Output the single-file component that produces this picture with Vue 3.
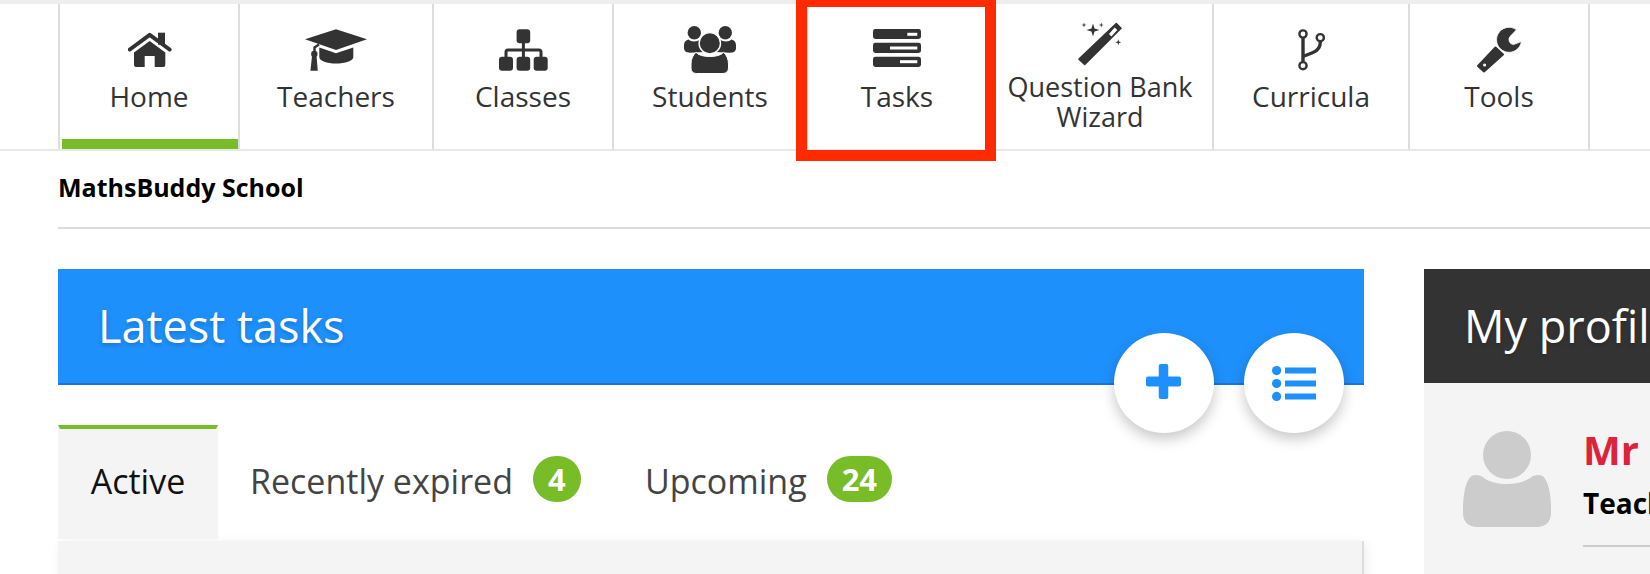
<template>
  <div class="page">
    <nav class="main-nav">
      <a class="nav-item nav-home">
        <span class="nav-icon">
          <svg width="44" height="62" viewBox="0 -4 44 62">
            <path d="M1.8 25.5L21.7 10.8L41.6 25.5" fill="none" stroke="#333" stroke-width="4" stroke-linecap="round" stroke-linejoin="round" />
            <rect x="30" y="8.7" width="7" height="12" fill="#333" />
            <path d="M21.7 17L37.3 28.5V41a2 2 0 0 1-2 2H26.7V32H16.7V43H8a2 2 0 0 1-2-2V28.5Z" fill="#333" />
          </svg>
        </span>
        <span class="nav-label">Home</span>
        <span class="nav-indicator"></span>
      </a>
      <a class="nav-item nav-teachers">
        <span class="nav-icon">
          <svg width="62" height="62" viewBox="0 -4 62 62">
            <path d="M0 15.3L31 5.3L62 15.3L31 26Z" fill="#333" />
            <path d="M14.3 23.5L31 29.3L48.3 23.5V33C48.3 37 40 39.5 31 39.5C22 39.5 14.3 37 14.3 33Z" fill="#333" />
            <path d="M14 20.5L9.5 23.5V31" fill="none" stroke="#333" stroke-width="2.4" />
            <circle cx="9.3" cy="30" r="3.2" fill="#333" />
            <path d="M7 32H11.5L12.8 46.7H5.4Z" fill="#333" />
          </svg>
        </span>
        <span class="nav-label">Teachers</span>
      </a>
      <a class="nav-item nav-classes">
        <span class="nav-icon">
          <svg width="49" height="62" viewBox="0 -4 49 62">
            <path d="M24.4 18V34M7 34V28a2 2 0 0 1 2-2H40a2 2 0 0 1 2 2V34" fill="none" stroke="#333" stroke-width="3" />
            <rect x="17.6" y="5.3" width="13.6" height="14" rx="3" fill="#333" />
            <rect x="0" y="32.7" width="14" height="14" rx="3" fill="#333" />
            <rect x="17.6" y="32.7" width="13.6" height="14" rx="3" fill="#333" />
            <rect x="34.7" y="32.7" width="14" height="14" rx="3" fill="#333" />
          </svg>
        </span>
        <span class="nav-label">Classes</span>
      </a>
      <a class="nav-item nav-students">
        <span class="nav-icon">
          <svg width="52" height="62" viewBox="0 -4 52 62">
            <circle cx="10.3" cy="8.7" r="6.7" fill="#333" />
            <circle cx="41.3" cy="8.7" r="6.7" fill="#333" />
            <path d="M4.5 15.5C7 18 13 18 16 15.5L20 28L6 28.7C2 28.7 0 27 0 24V21C0 18 2 16 4.5 15.5Z" fill="#333" />
            <path d="M47.5 15.5C45 18 39 18 36 15.5L32 28L46 28.7C50 28.7 52 27 52 24V21C52 18 50 16 47.5 15.5Z" fill="#333" />
            <circle cx="25.8" cy="19.3" r="10.7" fill="#333" stroke="#fff" stroke-width="1.4" />
            <path d="M12 28.2C16 34 35.5 34 39.5 28.2C42.5 31 44.5 35 44.5 40V44C44.5 47.5 42 49.5 39 49.5H12.5C9 49.5 7 47.5 7 44V40C7 35 9 31 12 28.2Z" fill="#333" stroke="#fff" stroke-width="1" />
          </svg>
        </span>
        <span class="nav-label">Students</span>
      </a>
      <a class="nav-item nav-tasks">
        <span class="nav-icon">
          <svg width="48" height="62" viewBox="0 -4 48 62">
            <rect x="0" y="5" width="48" height="10" rx="2.4" fill="#333" />
            <rect x="0" y="18.8" width="48" height="10.2" rx="2.4" fill="#333" />
            <rect x="0" y="32.8" width="48" height="10.2" rx="2.4" fill="#333" />
            <rect x="34.3" y="8.8" width="10" height="3" fill="#fff" />
            <rect x="17" y="22.5" width="27.3" height="3" fill="#fff" />
            <rect x="27" y="36.2" width="17.3" height="3" fill="#fff" />
          </svg>
        </span>
        <span class="nav-label">Tasks</span>
        <span class="highlight-box"></span>
      </a>
      <a class="nav-item nav-wizard">
        <span class="nav-icon nav-icon-short">
          <svg width="44" height="52" viewBox="0 0 44 52">
            <path d="M15 3.5L16.5 8.5L21.5 10L16.5 11.5L15 16.5L13.5 11.5L8.5 10L13.5 8.5Z" fill="#333" />
            <path d="M6 2.5L6.6 4.4L8.5 5L6.6 5.6L6 7.5L5.4 5.6L3.5 5L5.4 4.4Z" fill="#333" />
            <path d="M23.3 2.5L23.9 4.4L25.8 5L23.9 5.6L23.3 7.5L22.7 5.6L20.8 5L22.7 4.4Z" fill="#333" />
            <path d="M40.3 19.3L41 21.6L43.3 22.3L41 23L40.3 25.3L39.6 23L37.3 22.3L39.6 21.6Z" fill="#333" />
            <path d="M38.3 3.5L43 8.2L6.7 44.5L1 39.2Z" fill="#333" stroke="#333" stroke-width="1.6" stroke-linejoin="round" />
            <path d="M31 14L36.7 7.6L39.3 10L33.3 16.5Z" fill="#fff" />
          </svg>
        </span>
        <span class="nav-label">Question Bank<br />Wizard</span>
      </a>
      <a class="nav-item nav-curricula">
        <span class="nav-icon">
          <svg width="27" height="62" viewBox="0 -4 27 62">
            <path d="M5 14V37.5M5 32.5L15 28.5C20 26.5 22.3 23 22.3 18" fill="none" stroke="#333" stroke-width="3.4" />
            <circle cx="5" cy="10" r="3.6" fill="none" stroke="#333" stroke-width="2.4" />
            <circle cx="5" cy="41.7" r="3.6" fill="none" stroke="#333" stroke-width="2.4" />
            <circle cx="22.3" cy="13.7" r="3.6" fill="none" stroke="#333" stroke-width="2.4" />
          </svg>
        </span>
        <span class="nav-label">Curricula</span>
      </a>
      <a class="nav-item nav-tools">
        <span class="nav-icon">
          <svg width="45" height="62" viewBox="0 -4 45 62">
            <path d="M18.5 23.5L26 30.5L7 47.5L1 42Z" fill="#333" stroke="#333" stroke-width="2" stroke-linejoin="round" />
            <circle cx="7.6" cy="41" r="1.6" fill="#fff" />
            <path d="M39.5 5.8A12.5 12.5 0 1 0 44.4 17.5L36.5 20.6A5 5 0 0 1 33.5 12Z" fill="#333" stroke="#fff" stroke-width="0.8" />
          </svg>
        </span>
        <span class="nav-label">Tools</span>
      </a>
    </nav>

    <div class="school-row">MathsBuddy School</div>

    <div class="columns">
      <section class="tasks-col">
        <header class="panel-head panel-head-blue">
          <h2>Latest tasks</h2>
          <div class="head-actions">
            <button class="round-btn">
              <svg class="icon-plus" width="35" height="35" viewBox="0 0 35 35">
                <rect x="12.75" y="0" width="9.5" height="35" rx="2" fill="#1e90fc" />
                <rect x="0" y="12.5" width="35" height="10" rx="2" fill="#1e90fc" />
              </svg>
            </button>
            <button class="round-btn">
              <svg class="icon-list" width="44" height="35" viewBox="0 0 44 35">
                <circle cx="4.6" cy="4.6" r="4.6" fill="#1e90fc" />
                <circle cx="4.6" cy="17.5" r="4.6" fill="#1e90fc" />
                <circle cx="4.6" cy="30.4" r="4.6" fill="#1e90fc" />
                <rect x="13" y="1.5" width="31" height="6" fill="#1e90fc" />
                <rect x="13" y="14.5" width="31" height="6" fill="#1e90fc" />
                <rect x="13" y="27.5" width="31" height="6" fill="#1e90fc" />
              </svg>
            </button>
          </div>
        </header>

        <div class="tabs">
          <a v-for="tab in tabs" :key="tab.label" class="tab" :class="{ active: tab.active }">
            {{ tab.label }}
            <span v-if="tab.count" class="badge">{{ tab.count }}</span>
          </a>
        </div>
        <div class="tab-body"></div>
      </section>

      <aside class="profile-col">
        <header class="panel-head panel-head-dark">
          <h2>My profile</h2>
        </header>
        <div class="profile-body">
          <svg class="avatar" width="88" height="96" viewBox="0 0 88 96">
            <circle cx="44" cy="24" r="24" fill="#ccc" />
            <path d="M12 44C16 44 19 45 21 47C27 51 35 53 44 53C53 53 61 51 67 47C69 45 72 44 76 44C84 44 88 60 88 78V82C88 91 82 96 74 96H14C6 96 0 91 0 82V78C0 60 4 44 12 44Z" fill="#ccc" />
          </svg>
          <div class="profile-info">
            <div class="profile-name">Mr</div>
            <div class="profile-role">Teacher</div>
            <div class="profile-line"></div>
          </div>
        </div>
      </aside>
    </div>
  </div>
</template>

<script setup>
const tabs = [
  { label: 'Active', active: true },
  { label: 'Recently expired', count: 4 },
  { label: 'Upcoming', count: 24 }
]
</script>

<style>
html,
body {
  margin: 0;
  overflow: hidden;
  background: #fff;
}
</style>

<style scoped>
.page {
  width: 1650px;
  height: 574px;
  overflow: hidden;
  font-family: "Open Sans", "Noto Sans", sans-serif;
  color: #333;
}

.main-nav {
  display: flex;
  height: 145px;
  padding-left: 58px;
  border-top: 4px solid #eee;
  border-bottom: 2px solid #e8e8e8;
}

.nav-item {
  position: relative;
  display: flex;
  flex-direction: column;
  align-items: center;
  box-sizing: border-box;
  padding-top: 16px;
  border-left: 2px solid #ddd;
  font-size: 28px;
  line-height: 30px;
  text-align: center;
}

.nav-home { width: 180px; }
.nav-home .nav-icon { margin-left: 2px; }
.nav-teachers { width: 194px; }
.nav-classes { width: 180px; }
.nav-students { width: 194px; }
.nav-tasks { width: 180px; z-index: 1; }
.nav-wizard { width: 226px; font-size: 27px; }
.nav-curricula { width: 196px; }
.nav-tools { width: 182px; border-right: 2px solid #ddd; }

.nav-icon {
  display: block;
  height: 61px;
}

.nav-icon svg {
  display: block;
}

.nav-icon-short {
  height: 52px;
}

.nav-indicator {
  align-self: stretch;
  height: 10px;
  margin-top: auto;
  margin-left: 2px;
  background: #78bc28;
}

.highlight-box {
  position: absolute;
  top: -8px;
  left: -12px;
  right: -10px;
  bottom: -12px;
  border: 11px solid #ff2a00;
}

.school-row {
  height: 76px;
  margin-left: 58px;
  border-bottom: 2px solid #ddd;
  font-size: 25px;
  font-weight: 700;
  line-height: 72px;
  color: #000;
}

.columns {
  display: flex;
  gap: 60px;
  margin-top: 40px;
  margin-left: 58px;
}

.tasks-col {
  flex: 0 0 1306px;
}

.profile-col {
  flex: 0 0 400px;
}

.panel-head {
  position: relative;
  display: flex;
  align-items: center;
  box-sizing: border-box;
  height: 116px;
  padding-left: 40px;
  padding-bottom: 2px;
}

.panel-head h2 {
  margin: 0;
  font-size: 45px;
  font-weight: 400;
  color: #fff;
  text-shadow: 0 2px 4px rgba(0, 0, 0, 0.2);
}

.panel-head-blue {
  background: #1e90fc;
  border-bottom: 2px solid #1a76d6;
}

.panel-head-dark {
  height: 114px;
  background: #333;
}

.head-actions {
  position: absolute;
  top: 64px;
  right: 20px;
  display: flex;
  gap: 30px;
}

.round-btn {
  display: flex;
  align-items: center;
  justify-content: center;
  width: 100px;
  height: 100px;
  padding: 0;
  border: 0;
  border-radius: 50%;
  background: #fff;
  box-shadow: 0 6px 14px rgba(0, 0, 0, 0.22);
}

.icon-plus {
  margin: -3px 0 0 -2px;
}

.icon-list {
  margin-left: -1px;
}

.tabs {
  display: flex;
  margin-top: 40px;
  font-size: 34px;
  color: #444;
}

.tab {
  display: flex;
  align-items: center;
  box-sizing: border-box;
  height: 114px;
  padding: 0 32px 6px;
  border-top: 4px solid transparent;
  white-space: nowrap;
}

.tab.active {
  justify-content: center;
  width: 160px;
  padding-left: 0;
  padding-right: 0;
  border-top-color: #78bc28;
  border-left: 2px solid #f4f4f4;
  border-right: 2px solid #f4f4f4;
  background: #f4f4f4;
  color: #111;
}

.badge {
  display: flex;
  align-items: center;
  justify-content: center;
  box-sizing: border-box;
  min-width: 48px;
  height: 46px;
  margin-left: 20px;
  margin-top: -4px;
  padding: 0 15px;
  border-radius: 23px;
  background: #78bc28;
  color: #fff;
  font-size: 31px;
  font-weight: 700;
}

.tab-body {
  height: 40px;
  margin-top: 2px;
  background: #f4f4f4;
  border-right: 2px solid #ddd;
  box-shadow: 2px 2px 10px rgba(0, 0, 0, 0.08);
}

.profile-body {
  display: flex;
  gap: 32px;
  height: 200px;
  padding: 48px 0 0 39px;
  box-sizing: border-box;
  background: #f4f4f4;
}

.avatar {
  flex-shrink: 0;
}

.profile-info {
  width: 240px;
  margin-top: -6px;
}

.profile-name {
  font-size: 40px;
  font-weight: 700;
  line-height: 50px;
  color: #dc2339;
}

.profile-role {
  margin-top: 11px;
  font-size: 28px;
  font-weight: 700;
  line-height: 34px;
  color: #000;
}

.profile-line {
  height: 2px;
  margin-top: 25px;
  background: #ccc;
}
</style>
